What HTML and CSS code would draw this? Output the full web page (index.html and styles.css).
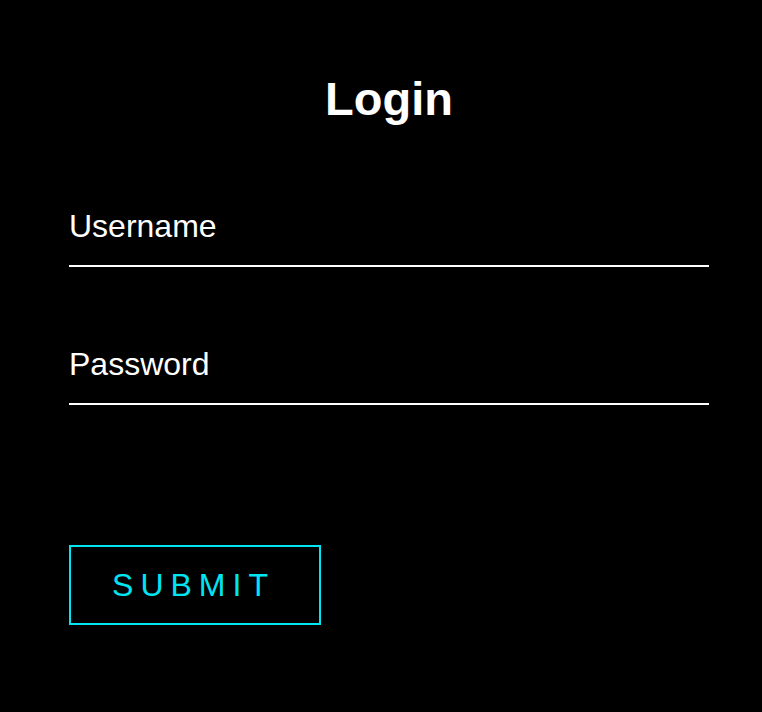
FILE: index.html
```html
<!DOCTYPE html>
<html>
<head>
<meta charset="utf-8">
<link rel="stylesheet" href="styles.css">
</head>
<body>
<form class="login">
  <h1 class="title">Login</h1>
  <div class="field field-first"><span class="label">Username</span></div>
  <div class="field field-second"><span class="label">Password</span></div>
  <button type="button" class="submit">SUBMIT</button>
</form>
</body>
</html>
```
FILE: styles.css
```css
html, body {
  margin: 0;
  padding: 0;
  background: #000;
  height: 100%;
}
body {
  font-family: "Liberation Sans", Arial, sans-serif;
  color: #fff;
}
.login {
  width: 640px;
  margin-left: 69px;
  padding-top: 73px;
  display: flex;
  flex-direction: column;
}
.title {
  margin: 0;
  font-size: 47px;
  line-height: 52px;
  font-weight: bold;
  text-align: center;
}
.field {
  border-bottom: 2px solid #fff;
  padding-bottom: 21px;
}
.field-first {
  margin-top: 83px;
}
.field-second {
  margin-top: 79px;
}
.label {
  display: block;
  font-size: 32px;
  line-height: 36px;
}
.submit {
  margin-top: 140px;
  width: 252px;
  height: 80px;
  background: transparent;
  border: 2px solid #00e5f2;
  color: #00e5f2;
  font-family: "Liberation Sans", Arial, sans-serif;
  font-size: 32px;
  letter-spacing: 7px;
  padding: 0 3px 0 0;
  text-align: center;
}
```
